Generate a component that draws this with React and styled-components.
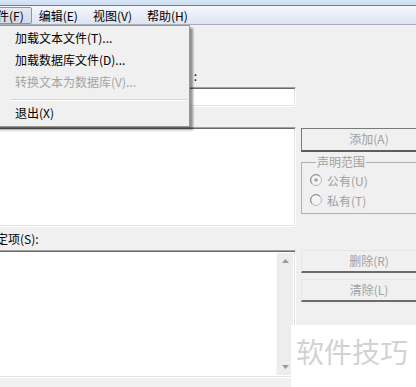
import styled, { createGlobalStyle, css } from "styled-components";

const GlobalStyle = createGlobalStyle`
  html, body {
    margin: 0;
    padding: 0;
    background: #f0f0f0;
  }
  body {
    font-family: "Noto Sans CJK SC", "Noto Sans", sans-serif;
    font-size: 12px;
    color: #000;
  }
`;

// Window frame
const Window = styled.div`
  position: relative;
  width: 416px;
  height: 387px;
  overflow: hidden;
  background: #f0f0f0;
`;

const TitleStrip = styled.div`
  height: 5px;
  background: linear-gradient(#dbe8f6, #c9dcf1);
  border-bottom: 1px solid #6f8096;
`;

const MenuBar = styled.div`
  height: 18px;
  background: linear-gradient(#f5f7fc, #dde3f0);
  border-bottom: 1px solid #a7aeb9;
  overflow: hidden;
`;

const MenuTrack = styled.div`
  display: flex;
  align-items: center;
  height: 100%;
  margin-left: -22px;
`;

const MenuItem = styled.div`
  box-sizing: border-box;
  height: 17px;
  line-height: 15px;
  padding: 0 7px 0 6px;
  border: 1px solid transparent;
  border-radius: 2px;
  white-space: nowrap;

  ${(p) =>
    p.$open &&
    css`
      border-color: #8796ab;
      background: linear-gradient(#e4e9f2, #d3dae7);
    `}
`;

// Drop-down menu
const DropMenu = styled.div`
  position: absolute;
  top: 25px;
  left: -10px;
  width: 200px;
  box-sizing: border-box;
  padding: 1px 2px 2px;
  background: #f0f0f0;
  border: 1px solid #979797;
  box-shadow: 3px 3px 2px rgba(0, 0, 0, 0.4);
  z-index: 2;
`;

const DropItem = styled.div`
  height: 22px;
  line-height: 22px;
  padding-left: 22px;
  white-space: nowrap;
  color: ${(p) => (p.$disabled ? "#a3a3a3" : "#000")};
`;

const DropSeparator = styled.div`
  margin: 6px 0 1px 18px;
  border-top: 1px solid #d5d5d5;
  border-bottom: 1px solid #fff;
`;

// Dialog body
const Body = styled.div`
  display: flex;
  gap: 5px;
  margin-left: -16px;
  font-size: 12px;
`;

const LeftCol = styled.div`
  display: flex;
  flex-direction: column;
  width: 312px;
  flex-shrink: 0;
`;

const RightCol = styled.div`
  display: flex;
  flex-direction: column;
  width: 130px;
  flex-shrink: 0;
  padding-top: 103px;
`;

const FieldLabel = styled.div`
  line-height: 14px;
  margin-top: ${(p) => p.$top}px;
  width: ${(p) => (p.$width ? `${p.$width}px` : "auto")};
  text-align: ${(p) => (p.$right ? "right" : "left")};
  white-space: nowrap;
`;

const Colon = styled.span`
  margin-left: 4px;
`;

const sunken = css`
  box-sizing: border-box;
  background: #fff;
  border-style: solid;
  border-width: 1px;
  border-color: #a0a0a0 #fff #fff #a0a0a0;
  box-shadow: inset 1px 1px #696969, inset -1px -1px #e3e3e3;
`;

const TextBox = styled.div`
  ${sunken};
  height: 20px;
  margin-top: 4px;
`;

const ListBox = styled.div`
  ${sunken};
  display: flex;
  justify-content: flex-end;
  height: ${(p) => p.$h}px;
  margin-top: ${(p) => p.$top}px;
  padding: 2px;
`;

const ScrollBar = styled.div`
  display: flex;
  flex-direction: column;
  justify-content: space-between;
  align-items: center;
  width: 16px;
  background: #ededed;
  border-left: 1px solid #f7f7f7;
  padding: 6px 0;
`;

const PushButton = styled.div`
  box-sizing: border-box;
  height: ${(p) => p.$h}px;
  margin-top: ${(p) => p.$top || 0}px;
  border: 1px solid #e6e6e6;
  border-bottom: 2px solid #6b6b6b;
  border-right-color: #6b6b6b;
  line-height: ${(p) => p.$h - 4}px;
  padding-left: 6px;
  text-align: center;
  color: #a0a0a0;
  background: #f0f0f0;

  ${(p) =>
    p.$default &&
    css`
      border-color: #7a7a7a;
      border-bottom-color: #5e5e5e;
    `}
`;

const GroupBox = styled.fieldset`
  box-sizing: border-box;
  height: 58px;
  margin: 4px 0 0;
  padding: 2px 8px;
  border: 1px solid #b0b0b0;
  min-width: 0;
`;

const GroupLegend = styled.legend`
  margin-left: 6px;
  padding: 0 1px;
  line-height: 12px;
  color: #a0a0a0;
`;

const RadioRow = styled.div`
  display: flex;
  align-items: center;
  gap: 5px;
  height: 20px;
  color: #a0a0a0;
`;

const Watermark = styled.div`
  position: absolute;
  right: 0;
  bottom: 0;
  width: 125px;
  height: 62px;
  box-sizing: border-box;
  padding: 8px 0 0 5px;
  background: #fff;
  color: #d2d2d2;
  font-size: 28px;
  line-height: 36px;
  white-space: nowrap;
  z-index: 3;
`;

const Radio = ({ checked }) => (
  <svg width="12" height="12" viewBox="0 0 12 12">
    <circle cx="6" cy="6" r="5.5" fill="#f4f4f4" stroke="#b8b8b8" />
    <path d="M2.2 9.8 A5 5 0 0 1 9.8 2.2" fill="none" stroke="#8a8a8a" />
    {checked && <circle cx="6" cy="6" r="1.8" fill="#a0a0a0" />}
  </svg>
);

const Arrow = ({ down }) => (
  <svg width="7" height="4" viewBox="0 0 7 4">
    <path d={down ? "M0 0 H7 L3.5 4 Z" : "M0 4 H7 L3.5 0 Z"} fill="#9a9a9a" />
  </svg>
);

const App = () => {
  return (
    <Window>
      <GlobalStyle />
      <TitleStrip />
      <MenuBar>
        <MenuTrack>
          <MenuItem $open>文件(F)</MenuItem>
          <MenuItem>编辑(E)</MenuItem>
          <MenuItem>视图(V)</MenuItem>
          <MenuItem>帮助(H)</MenuItem>
        </MenuTrack>
      </MenuBar>

      <DropMenu>
        <DropItem>加载文本文件(T)...</DropItem>
        <DropItem>加载数据库文件(D)...</DropItem>
        <DropItem $disabled>转换文本为数据库(V)...</DropItem>
        <DropSeparator />
        <DropItem>退出(X)</DropItem>
      </DropMenu>

      <Body>
        <LeftCol>
          <FieldLabel $top={44} $width={213} $right>
            声明(N)<Colon>:</Colon>
          </FieldLabel>
          <TextBox />
          <ListBox $h={100} $top={20} />
          <FieldLabel $top={5}>选定项(S):</FieldLabel>
          <ListBox $h={128} $top={4}>
            <ScrollBar>
              <Arrow />
              <Arrow down />
            </ScrollBar>
          </ListBox>
        </LeftCol>

        <RightCol>
          <PushButton $h={24} $default>
            添加(A)
          </PushButton>
          <GroupBox>
            <GroupLegend>声明范围</GroupLegend>
            <RadioRow>
              <Radio checked />
              公有(U)
            </RadioRow>
            <RadioRow>
              <Radio />
              私有(T)
            </RadioRow>
          </GroupBox>
          <PushButton $h={23} $top={36}>
            删除(R)
          </PushButton>
          <PushButton $h={23} $top={6}>
            清除(L)
          </PushButton>
        </RightCol>
      </Body>

      <Watermark>软件技巧</Watermark>
    </Window>
  );
};

export default App;
